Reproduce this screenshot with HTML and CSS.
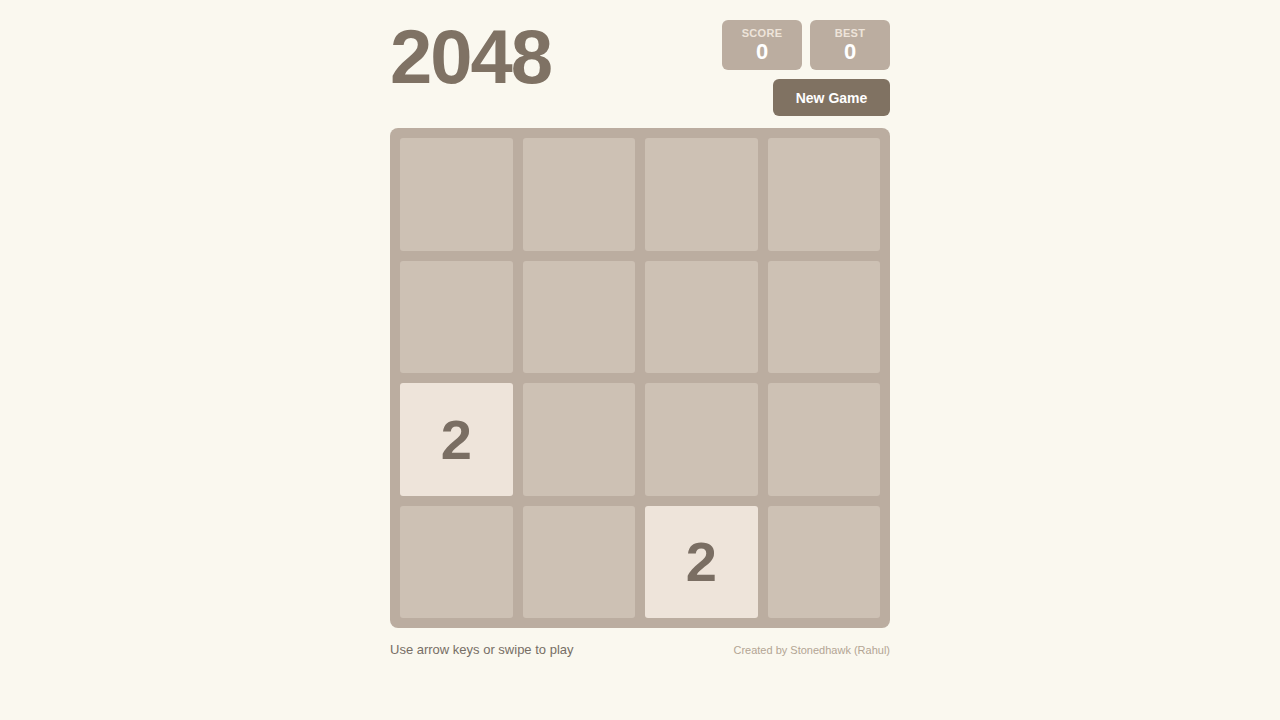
FILE: index.html
```html
<!DOCTYPE html>
<html lang="en">
<head>
<meta charset="utf-8">
<title>2048</title>
<link rel="stylesheet" href="styles.css">
</head>
<body>
<div class="container">
  <header class="header">
    <h1 class="title">2048</h1>
    <div class="controls">
      <div class="scores">
        <div class="score-box"><div class="score-label">SCORE</div><div class="score-value">0</div></div>
        <div class="score-box"><div class="score-label">BEST</div><div class="score-value">0</div></div>
      </div>
      <button class="new-game">New Game</button>
    </div>
  </header>
  <div class="board">
    <div class="cell"></div><div class="cell"></div><div class="cell"></div><div class="cell"></div>
    <div class="cell"></div><div class="cell"></div><div class="cell"></div><div class="cell"></div>
    <div class="cell tile-2">2</div><div class="cell"></div><div class="cell"></div><div class="cell"></div>
    <div class="cell"></div><div class="cell"></div><div class="cell tile-2">2</div><div class="cell"></div>
  </div>
  <footer class="footer">
    <span class="hint">Use arrow keys or swipe to play</span>
    <span class="credit">Created by Stonedhawk (Rahul)</span>
  </footer>
</div>
</body>
</html>
```

FILE: styles.css
```css
html, body {
  margin: 0;
  padding: 0;
  background: #faf8ef;
  font-family: "Liberation Sans", Arial, sans-serif;
  color: #776e65;
}
.container {
  width: 500px;
  margin: 0 auto;
  padding-top: 20px;
}
.header {
  display: flex;
  justify-content: space-between;
  align-items: flex-start;
}
.title {
  margin: 0;
  font-size: 76px;
  line-height: 74px;
  font-weight: bold;
  letter-spacing: -2px;
  color: #7f7264;
}
.controls {
  display: flex;
  flex-direction: column;
  align-items: flex-end;
  gap: 9px;
}
.scores {
  display: flex;
  gap: 8px;
}
.score-box {
  width: 80px;
  height: 50px;
  box-sizing: border-box;
  background: #bbada0;
  border-radius: 6px;
  display: flex;
  flex-direction: column;
  align-items: center;
  padding-top: 7px;
}
.score-label {
  font-size: 11px;
  line-height: 13px;
  font-weight: bold;
  color: #eee4da;
  letter-spacing: 0.3px;
}
.score-value {
  font-size: 22px;
  line-height: 24px;
  font-weight: bold;
  color: #ffffff;
}
.new-game {
  width: 117px;
  height: 37px;
  border: none;
  border-radius: 6px;
  background: #807262;
  color: #ffffff;
  font-family: "Liberation Sans", Arial, sans-serif;
  font-size: 14px;
  font-weight: bold;
  padding: 0;
  cursor: pointer;
}
.board {
  margin-top: 12px;
  width: 500px;
  height: 500px;
  box-sizing: border-box;
  padding: 10px;
  background: #bbada0;
  border-radius: 8px;
  display: grid;
  grid-template-columns: repeat(4, 1fr);
  grid-template-rows: repeat(4, 1fr);
  gap: 10px;
}
.cell {
  background: #cdc1b4;
  border-radius: 3px;
  display: flex;
  align-items: center;
  justify-content: center;
}
.tile-2 {
  background: #eee4da;
  color: #7a6e63;
  font-size: 56px;
  font-weight: bold;
}
.footer {
  display: flex;
  justify-content: space-between;
  align-items: baseline;
  margin-top: 14px;
}
.hint {
  font-size: 13px;
  color: #776e65;
}
.credit {
  font-size: 11px;
  color: #b3a594;
}
```
